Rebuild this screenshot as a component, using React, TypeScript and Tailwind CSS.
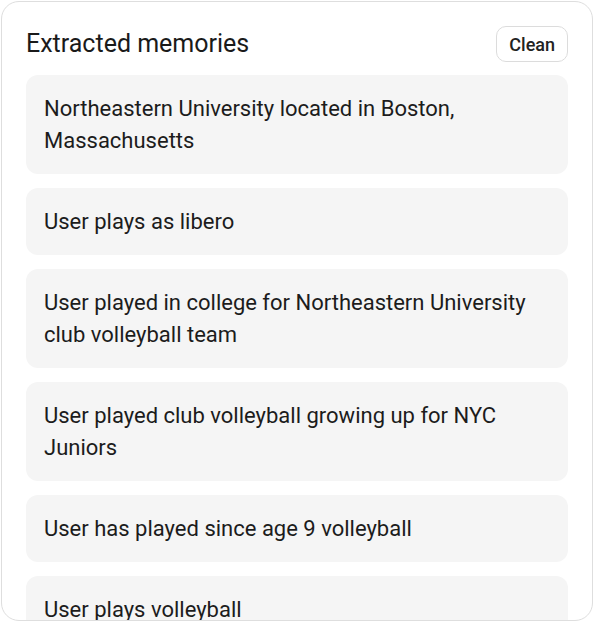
const memories = [
  'Northeastern University located in Boston, Massachusetts',
  'User plays as libero',
  'User played in college for Northeastern University club volleyball team',
  'User played club volleyball growing up for NYC Juniors',
  'User has played since age 9 volleyball',
  'User plays volleyball',
]

export default function App() {
  return (
    <div className="w-[594px] h-[622px] p-px bg-white font-['Roboto',sans-serif]">
      <div className="h-full flex flex-col border border-[#dedede] rounded-[18px] overflow-hidden bg-white">
        {/* Header */}
        <div className="flex items-center justify-between px-6 pt-6 pb-[13px] shrink-0">
          <h2 className="text-[25px] leading-9 text-[#1a1a1a]">Extracted memories</h2>
          <button className="h-9 px-3 rounded-[10px] border border-[#dcdcdc] bg-white text-[18px] font-medium text-[#222]">
            Clean
          </button>
        </div>

        {/* List */}
        <div className="flex-1 overflow-hidden px-6">
          <div className="flex flex-col gap-[14px]">
            {memories.map((m) => (
              <div
                key={m}
                className="rounded-xl bg-[#f5f5f5] px-[18px] py-[17.5px] text-[22px] leading-8 text-[#1c1c1c]"
              >
                {m}
              </div>
            ))}
          </div>
        </div>
      </div>
    </div>
  )
}
